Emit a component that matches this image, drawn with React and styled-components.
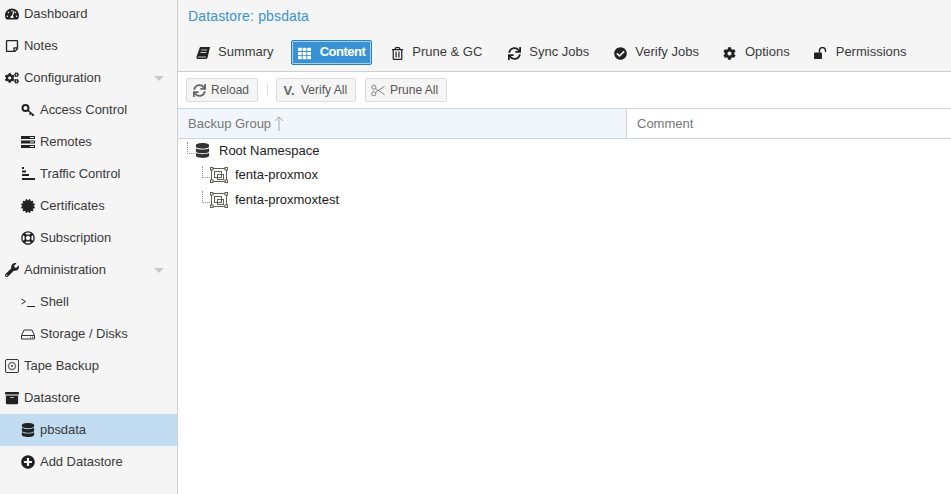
import React from "react";
import styled, { createGlobalStyle } from "styled-components";
import {
  FaTachometerAlt,
  FaRegStickyNote,
  FaCogs,
  FaCertificate,
  FaRegLifeRing,
  FaWrench,
  FaArchive,
  FaDatabase,
  FaPlusCircle,
  FaTh,
  FaRegTrashAlt,
  FaSync,
  FaCheckCircle,
  FaCog
} from "react-icons/fa";

const GlobalStyle = createGlobalStyle`
  html, body {
    margin: 0;
    height: 100%;
    overflow: hidden;
    background: #fff;
    font-family: "Liberation Sans", Arial, sans-serif;
    font-size: 13px;
  }
  #root {
    height: 100%;
  }
`;

const Page = styled.div`
  display: flex;
  width: 951px;
  height: 494px;
  overflow: hidden;
`;

const Sidebar = styled.nav`
  width: 178px;
  box-sizing: border-box;
  flex: none;
  border-right: 1px solid #cfcfcf;
  background: #f5f5f5;
  overflow: hidden;
`;

const NavList = styled.div`
  margin-top: -2px;
`;

const NavRow = styled.div`
  display: flex;
  align-items: center;
  height: 32px;
  box-sizing: border-box;
  padding: 0 0 2px ${p => (p.$child ? 21 : 5)}px;
  background: ${p => (p.$selected ? "#c2ddf2" : "transparent")};
  color: #3a3a3a;
  letter-spacing: -0.03px;
`;

const NavIcon = styled.span`
  display: flex;
  align-items: center;
  justify-content: center;
  width: 14px;
  height: 14px;
  margin: 2px 5px 0 0;
  color: #222;
  font-size: 14px;
`;

const NavArrow = styled.span`
  margin: 2px 13px 0 auto;
  width: 0;
  height: 0;
  border-left: 5px solid transparent;
  border-right: 5px solid transparent;
  border-top: 5px solid #c9c9c9;
`;

const Main = styled.main`
  flex: 1;
  min-width: 0;
  display: flex;
  flex-direction: column;
`;

const Header = styled.header`
  height: 72px;
  box-sizing: border-box;
  background: #f5f5f5;
  border-bottom: 1px solid #cfcfcf;
  padding: 8px 10px 0;
`;

const Title = styled.h1`
  margin: 0;
  height: 17px;
  line-height: 17px;
  font-size: 14px;
  font-weight: 400;
  color: #3892d4;
  letter-spacing: 0.15px;
`;

const Tabs = styled.div`
  display: flex;
  align-items: center;
  gap: 1px;
  margin-top: 15px;
`;

const Tab = styled.div`
  display: flex;
  align-items: center;
  height: 25px;
  box-sizing: border-box;
  margin-left: ${p => p.$gap || 0}px;
  padding: 0 ${p => (p.$active ? 6 : 5)}px 2px 5px;
  border: 1px solid ${p => (p.$active ? "#2f7fc0" : "transparent")};
  border-radius: 2px;
  background: ${p => (p.$active ? "#3892d4" : "transparent")};
  box-shadow: ${p => (p.$active ? "inset 0 0 0 1px #a9d2ef" : "none")};
  color: ${p => (p.$active ? "#fff" : "#3a3a3a")};
  font-weight: ${p => (p.$active ? 700 : 400)};
  letter-spacing: ${p => (p.$active ? "-0.5px" : "0")};
  white-space: nowrap;
`;

const TabIcon = styled.span`
  display: flex;
  align-items: center;
  justify-content: center;
  width: 16px;
  margin: 3px 7px 0 0;
  font-size: 13px;
  color: ${p => (p.$active ? "#fff" : "#222")};
`;

const Toolbar = styled.div`
  display: flex;
  align-items: center;
  height: 37px;
  box-sizing: border-box;
  padding: 0 8px;
  background: #fff;
  border-bottom: 1px solid #cfd4d8;
`;

const ToolButton = styled.div`
  display: flex;
  align-items: center;
  height: 24px;
  box-sizing: border-box;
  padding: 0 8px 0 5px;
  border: 1px solid #dcdcdc;
  border-radius: 2px;
  background: #f5f5f5;
  color: #555;
  font-size: 12px;
`;

const ToolIcon = styled.span`
  display: flex;
  align-items: center;
  justify-content: center;
  width: 14px;
  margin-right: 5px;
  font-size: 13px;
  color: #666;
  font-weight: 700;
`;

const Separator = styled.span`
  width: 1px;
  height: 14px;
  margin: 0 8px 0 9px;
  background: #e2e2e2;
`;

const Spacer = styled.span`
  width: 9px;
`;

const GridHead = styled.div`
  display: flex;
  height: 30px;
  box-sizing: border-box;
  border-bottom: 1px solid #cfd4d8;
`;

const HeadCell = styled.div`
  display: flex;
  align-items: center;
  box-sizing: border-box;
  width: ${p => p.$width || "auto"};
  flex: ${p => (p.$width ? "none" : 1)};
  padding-left: 10px;
  background: ${p => (p.$sorted ? "#f0f6fb" : "#fff")};
  border-right: ${p => (p.$sorted ? "1px solid #d4d4d4" : "none")};
  color: #777;
`;

const SortArrow = styled.svg`
  margin-left: 3px;
`;

const Tree = styled.div`
  flex: 1;
  background: #fff;
`;

const TreeRow = styled.div`
  display: flex;
  align-items: center;
  height: ${p => (p.$depth ? 25 : 23)}px;
  padding-left: ${p => (p.$depth ? 24 : 9)}px;
  color: #222;
  font-size: 13px;
`;

const Elbow = styled.span`
  width: ${p => (p.$depth ? 8 : 7)}px;
  height: 12px;
  margin-top: -6px;
  flex: none;
  border-left: 1px dotted #999;
  border-bottom: 1px dotted #999;
  box-sizing: border-box;
`;

const RootIcon = styled.span`
  display: flex;
  width: 16px;
  justify-content: center;
  margin-right: 9px;
  font-size: 15px;
  color: #333;
`;

const GroupIcon = styled.svg`
  flex: none;
  margin-right: 7px;
`;

const KeyIcon = () => (
  <svg width="14" height="14" viewBox="0 0 14 14" fill="none" stroke="#222">
    <circle cx="4.5" cy="5" r="3" strokeWidth="2" />
    <path d="M7 7.5l6 5M10 10l-1.5 1.8M12 11.5l-1 1.2" strokeWidth="1.6" />
  </svg>
);

const TrafficIcon = () => (
  <svg width="14" height="14" viewBox="0 0 14 14" fill="#222">
    <rect x="1" y="0" width="2" height="2" />
    <rect x="1" y="3.5" width="4" height="2" />
    <rect x="1" y="7" width="7" height="2" />
    <rect x="1" y="11" width="13" height="2" />
  </svg>
);

const RemotesIcon = () => (
  <svg width="14" height="14" viewBox="0 0 14 14" fill="#222">
    <rect x="0" y="1" width="14" height="3" />
    <rect x="0" y="5.5" width="14" height="3" />
    <rect x="0" y="10" width="14" height="3" />
    <rect x="9" y="2" width="4" height="1" fill="#f5f5f5" />
    <rect x="9" y="6.5" width="4" height="1" fill="#f5f5f5" />
    <rect x="9" y="11" width="4" height="1" fill="#f5f5f5" />
  </svg>
);

const ShellIcon = () => (
  <svg width="14" height="14" viewBox="0 0 14 14" fill="none" stroke="#222">
    <path d="M0.5 4l4 2.5-4 2.5" />
    <path d="M6 11.5h8" />
  </svg>
);

const DiskIcon = () => (
  <svg width="14" height="14" viewBox="0 0 14 14" fill="none" stroke="#333">
    <path d="M0.5 8.5l2.5-5.5h8l2.5 5.5v3.5h-13zM0.5 8.5h13" />
    <path d="M9 10.3h1M11 10.3h1" />
  </svg>
);

const TapeIcon = () => (
  <svg width="14" height="14" viewBox="0 0 14 14" fill="none" stroke="#333">
    <rect x="0.5" y="0.5" width="13" height="13" rx="1.5" />
    <circle cx="7" cy="7" r="3.5" strokeWidth="1.5" stroke="#777" />
    <circle cx="7" cy="7" r="1" fill="#333" stroke="none" />
  </svg>
);

const BookIcon = () => (
  <svg width="14" height="13" viewBox="0 0 14 13">
    <path d="M4 0h10l-2.4 10.5c-.2.9-1 1.5-2 1.5H2C.6 12 .1 11 .5 9.8z" fill="#222" />
    <path d="M5 3h6M4.4 5.5h6M2 10h8" stroke="#f5f5f5" strokeWidth="0.8" />
  </svg>
);

const UnlockIcon = () => (
  <svg width="13" height="12" viewBox="0 0 13 12">
    <rect x="0" y="5.5" width="8" height="6.5" rx="0.8" fill="#222" />
    <path d="M5.5 5.5V3.6a3 3 0 0 1 6 0V5" fill="none" stroke="#222" strokeWidth="1.4" />
  </svg>
);

const ScissorsIcon = () => (
  <svg width="15" height="13" viewBox="0 0 15 13" fill="none" stroke="#777">
    <circle cx="3" cy="3" r="2.2" />
    <circle cx="3" cy="10" r="2.2" />
    <path d="M4.8 4.3l9.7 6.7M4.8 8.7l9.7-6.7" />
  </svg>
);

const NAV_ITEMS = [
  { label: "Dashboard", icon: <FaTachometerAlt /> },
  { label: "Notes", icon: <FaRegStickyNote /> },
  { label: "Configuration", icon: <FaCogs />, arrow: true },
  { label: "Access Control", icon: <KeyIcon />, child: true },
  { label: "Remotes", icon: <RemotesIcon />, child: true },
  { label: "Traffic Control", icon: <TrafficIcon />, child: true },
  { label: "Certificates", icon: <FaCertificate />, child: true },
  { label: "Subscription", icon: <FaRegLifeRing />, child: true },
  { label: "Administration", icon: <FaWrench />, arrow: true },
  { label: "Shell", icon: <ShellIcon />, child: true },
  { label: "Storage / Disks", icon: <DiskIcon />, child: true },
  { label: "Tape Backup", icon: <TapeIcon /> },
  { label: "Datastore", icon: <FaArchive /> },
  { label: "pbsdata", icon: <FaDatabase />, child: true, selected: true },
  { label: "Add Datastore", icon: <FaPlusCircle />, child: true }
];

const TABS = [
  { label: "Summary", icon: <BookIcon />, gap: 1 },
  { label: "Content", icon: <FaTh />, active: true, gap: 10 },
  { label: "Prune & GC", icon: <FaRegTrashAlt />, gap: 10 },
  { label: "Sync Jobs", icon: <FaSync />, gap: 11 },
  { label: "Verify Jobs", icon: <FaCheckCircle />, gap: 10 },
  { label: "Options", icon: <FaCog />, gap: 10 },
  { label: "Permissions", icon: <UnlockIcon />, gap: 10 }
];

const BackupGroupIcon = () => (
  <GroupIcon width="18" height="16" viewBox="0 0 18 16" fill="none" stroke="#5f5f55">
    <rect x="1.5" y="1.5" width="15" height="13" />
    <rect x="4.5" y="4.5" width="7" height="6" />
    <rect x="7.5" y="7.5" width="6" height="5" />
    <rect x="0.5" y="0.5" width="2.5" height="2.5" fill="#fff" />
    <rect x="15" y="0.5" width="2.5" height="2.5" fill="#fff" />
    <rect x="0.5" y="13" width="2.5" height="2.5" fill="#fff" />
    <rect x="15" y="13" width="2.5" height="2.5" fill="#fff" />
  </GroupIcon>
);

export default function App() {
  return (
    <Page>
      <GlobalStyle />
      <Sidebar>
        <NavList>
          {NAV_ITEMS.map(item => (
            <NavRow key={item.label} $child={item.child} $selected={item.selected}>
              <NavIcon>{item.icon}</NavIcon>
              {item.label}
              {item.arrow && <NavArrow />}
            </NavRow>
          ))}
        </NavList>
      </Sidebar>
      <Main>
        <Header>
          <Title>Datastore: pbsdata</Title>
          <Tabs>
            {TABS.map(tab => (
              <Tab key={tab.label} $active={tab.active} $gap={tab.gap}>
                <TabIcon $active={tab.active}>{tab.icon}</TabIcon>
                {tab.label}
              </Tab>
            ))}
          </Tabs>
        </Header>
        <Toolbar>
          <ToolButton>
            <ToolIcon><FaSync /></ToolIcon>
            Reload
          </ToolButton>
          <Separator />
          <ToolButton>
            <ToolIcon>V.</ToolIcon>
            Verify All
          </ToolButton>
          <Spacer />
          <ToolButton>
            <ToolIcon><ScissorsIcon /></ToolIcon>
            Prune All
          </ToolButton>
        </Toolbar>
        <GridHead>
          <HeadCell $width="449px" $sorted>
            Backup Group
            <SortArrow width="10" height="15" viewBox="0 0 10 15" fill="none" stroke="#aaa">
              <path d="M5 15V1M1 5l4-4 4 4" />
            </SortArrow>
          </HeadCell>
          <HeadCell>Comment</HeadCell>
        </GridHead>
        <Tree>
          <TreeRow>
            <Elbow />
            <RootIcon><FaDatabase /></RootIcon>
            Root Namespace
          </TreeRow>
          <TreeRow $depth={1}>
            <Elbow $depth={1} />
            <BackupGroupIcon />
            fenta-proxmox
          </TreeRow>
          <TreeRow $depth={1}>
            <Elbow $depth={1} />
            <BackupGroupIcon />
            fenta-proxmoxtest
          </TreeRow>
        </Tree>
      </Main>
    </Page>
  );
}
